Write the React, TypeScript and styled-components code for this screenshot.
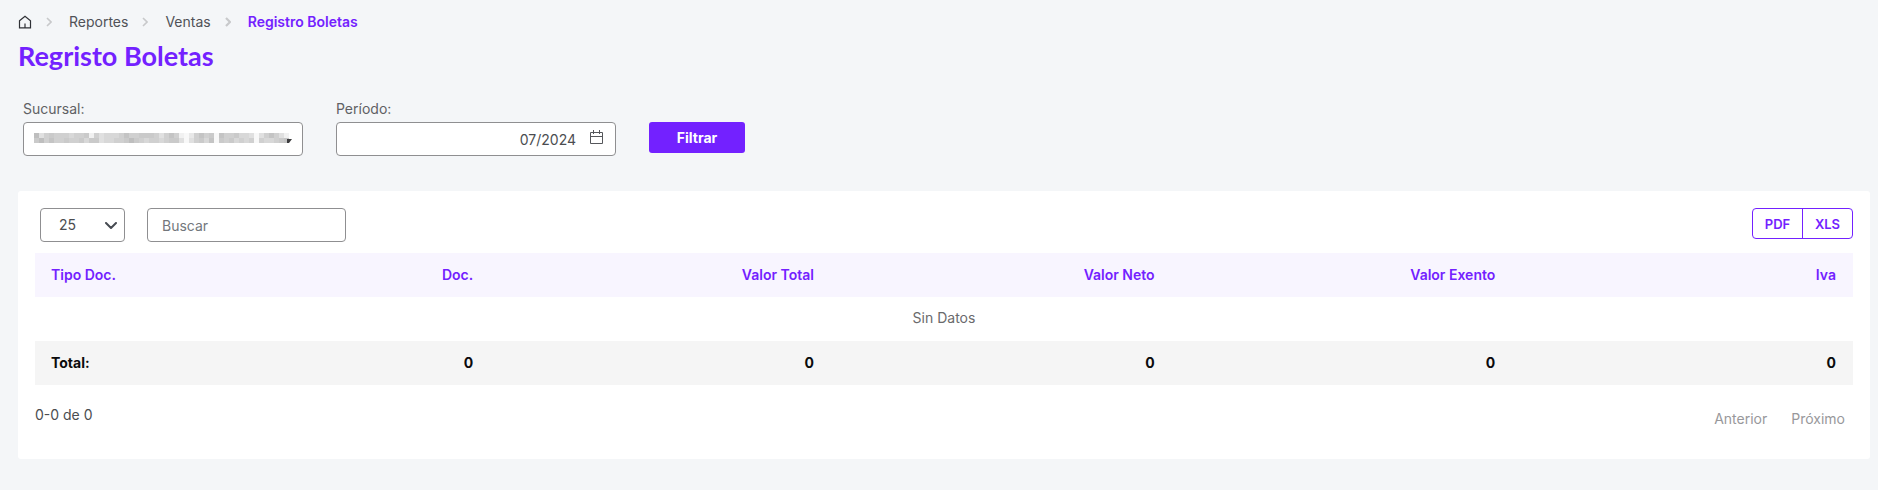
import React from 'react';
import styled, { createGlobalStyle } from 'styled-components';

const GlobalStyle = createGlobalStyle`
  * { box-sizing: border-box; }
  body {
    margin: 0;
    background: #f4f6f8;
    color: #4b4d50;
    font-family: Inter, "Liberation Sans", sans-serif;
    font-size: 14px;
    line-height: 20px;
  }
  button, input, select { font: inherit; color: inherit; margin: 0; }
`;

const Page = styled.main`
  padding: 12px 8px 32px 18px;
`;

const Breadcrumb = styled.ol`
  display: flex;
  align-items: center;
  list-style: none;
  margin: 0;
  padding: 0;
`;

const Crumb = styled.li<{ $current?: boolean }>`
  display: flex;
  align-items: center;
  color: ${p => (p.$current ? '#7321ff' : '#505257')};
  font-weight: ${p => (p.$current ? 600 : 400)};
`;

const CrumbLink = styled.a`
  display: flex;
  color: inherit;
  text-decoration: none;
`;

const Separator = styled.svg`
  margin: 0 17px 0 14px;
`;

const Title = styled.h1`
  margin: 8px 0 0;
  color: #7321ff;
  font: 700 27px/32px Lato, sans-serif;
`;

const Filters = styled.form`
  display: flex;
  align-items: flex-start;
  gap: 33px;
  margin: 27px 0 35px;
  padding-left: 5px;
`;

const Field = styled.div`
  display: flex;
  flex-direction: column;
  gap: 3px;
  width: 280px;
`;

const Label = styled.label`
  font-size: 14px;
  line-height: 20px;
  color: #5f6164;
`;

const Control = styled.div<{ $width?: string }>`
  position: relative;
  width: ${p => p.$width ?? '100%'};
`;

const controlBox = `
  display: block;
  width: 100%;
  height: 34px;
  border: 1px solid #8f8f91;
  border-radius: 4px;
  background: #fff;
  outline: none;
`;

const Select = styled.select<{ $pad: number }>`
  ${controlBox}
  appearance: none;
  padding: 0 12px 0 ${p => p.$pad}px;
`;

const TextBox = styled.input<{ $alignEnd?: boolean }>`
  ${controlBox}
  padding: 0 ${p => (p.$alignEnd ? 39 : 14)}px 0 14px;
  text-align: ${p => (p.$alignEnd ? 'right' : 'left')};
  &::placeholder { color: #73777c; opacity: 1; }
`;

const Overlay = styled.svg<{ $right: number; $top: number }>`
  position: absolute;
  right: ${p => p.$right}px;
  top: ${p => p.$top}px;
  pointer-events: none;
`;

const FilterButton = styled.button`
  width: 96px;
  height: 31px;
  margin: 23px 0 0;
  border: 0;
  border-radius: 3px;
  background: #7321ff;
  color: #fff;
  font-weight: 700;
`;

const Card = styled.section`
  background: #fff;
  border-radius: 3px;
  padding: 17px 17px 30px;
`;

const Toolbar = styled.div`
  display: flex;
  align-items: flex-start;
  gap: 22px;
  padding-left: 5px;
  margin-bottom: 11px;
`;

const ExportGroup = styled.div`
  display: flex;
  margin-left: auto;
  border: 1px solid #7321ff;
  border-radius: 4px;
`;

const ExportButton = styled.button`
  width: 49px;
  height: 29px;
  padding: 0;
  border: 0;
  background: none;
  color: #7321ff;
  font-size: 13px;
  font-weight: 600;
  & + & { width: 50px; border-left: 1px solid #7321ff; }
`;

const Table = styled.table`
  width: 100%;
  table-layout: fixed;
  border-collapse: collapse;
`;

const Row = styled.tr<{ $tone?: 'head' | 'total' }>`
  height: 44px;
  background: ${p => (p.$tone === 'head' ? '#f8f5ff' : p.$tone === 'total' ? '#f5f5f5' : '#fff')};
  color: ${p => (p.$tone === 'head' ? '#7321ff' : p.$tone === 'total' ? '#0b0b0c' : '#6a6a6c')};
  font-weight: ${p => (p.$tone === 'head' ? 600 : p.$tone === 'total' ? 700 : 400)};
`;

const cell = `
  padding: 0 17px 0 16px;
  text-align: right;
  font-weight: inherit;
  &:first-child { text-align: left; }
`;
const HeadCell = styled.th`${cell}`;
const Cell = styled.td`${cell}`;

const EmptyCell = styled.td`
  padding: 0 17px 2px;
  text-align: center;
`;

const Footer = styled.div`
  display: flex;
  justify-content: space-between;
  align-items: flex-start;
  padding-top: 20px;
`;

const Pager = styled.nav`
  display: flex;
  gap: 8px;
  padding-top: 4px;
`;

const PageButton = styled.button`
  padding: 0 8px;
  border: 0;
  background: none;
  &:disabled { color: #98989b; }
`;

const Chevron = ({ bold }: { bold?: boolean }) => (
  <Separator width="6" height="10" viewBox="0 0 6 10" fill="none" stroke="#c8c9cb" strokeWidth={bold ? 2.2 : 1.6} aria-hidden="true">
    <path d="M1 1l4 4-4 4" />
  </Separator>
);

// Grey level of each block of the masked branch name; 0 is darkest, 9 is lightest.
const maskRows = [
  '164344454438465554244333464248974243924435569642468',
  '314244344353365544313454454336964352934354549455432',
];
const levels = ['#b4b4b4', '#bebebe', '#c4c4c4', '#cacaca', '#d0d0d0', '#d8d8d8', '#e0e0e0', '#e8e8e8', '#f1f1f1', '#f8f8f8'];

const MaskedName = () => (
  <Overlay $right={14} $top={11} width="255" height="10" shapeRendering="crispEdges" aria-hidden="true">
    {maskRows.map((row, y) =>
      [...row].map((level, x) => (
        <rect key={`${x}-${y}`} x={x * 5} y={y * 5} width="5" height="5" fill={levels[Number(level)]} />
      )),
    )}
  </Overlay>
);

const columns = ['Tipo Doc.', 'Doc.', 'Valor Total', 'Valor Neto', 'Valor Exento', 'Iva'];
const totals = ['Total:', '0', '0', '0', '0', '0'];

export default function App() {
  return (
    <Page>
      <GlobalStyle />
      <Breadcrumb>
        <Crumb>
          <CrumbLink href="#" aria-label="Inicio">
            <svg width="14" height="14" viewBox="0 0 14 14" fill="none" stroke="#2f3136" strokeWidth="1.2">
              <path d="M1.5 5.800L7 1.300l5.500 4.500v7h-11zM7 8.500v4" />
            </svg>
          </CrumbLink>
        </Crumb>
        <Crumb><Chevron /><CrumbLink href="#">Reportes</CrumbLink></Crumb>
        <Crumb><Chevron /><CrumbLink href="#">Ventas</CrumbLink></Crumb>
        <Crumb $current aria-current="page"><Chevron bold />Registro Boletas</Crumb>
      </Breadcrumb>
      <Title>Regristo Boletas</Title>

      <Filters onSubmit={e => e.preventDefault()}>
        <Field>
          <Label htmlFor="sucursal">Sucursal:</Label>
          <Control>
            <Select id="sucursal" $pad={10}><option value="" /></Select>
            <MaskedName />
            <Overlay $right={11} $top={17} width="5" height="4" viewBox="0 0 5 4" fill="#3c3c3e" aria-hidden="true">
              <path d="M0 0h5L2 4H0z" />
            </Overlay>
          </Control>
        </Field>
        <Field>
          <Label htmlFor="periodo">Período:</Label>
          <Control>
            <TextBox id="periodo" $alignEnd defaultValue="07/2024" />
            <Overlay $right={12} $top={8} width="15" height="15" viewBox="0 0 15 15" fill="none" stroke="#55575b" aria-hidden="true">
              <path d="M1.500 2.500h12v11h-12zM1.500 6.500h12M4.500 0v4M10.500 0v4" />
            </Overlay>
          </Control>
        </Field>
        <FilterButton type="submit">Filtrar</FilterButton>
      </Filters>

      <Card>
        <Toolbar>
          <Control $width="85px">
            <Select $pad={18} aria-label="Filas por página"><option>25</option></Select>
            <Overlay $right={8} $top={14} width="12" height="8" viewBox="0 0 12 8" fill="none" stroke="#474b52" strokeWidth="2" strokeLinecap="round" strokeLinejoin="round" aria-hidden="true">
              <path d="M1 1l5 5 5-5" />
            </Overlay>
          </Control>
          <Control $width="199px">
            <TextBox type="search" placeholder="Buscar" aria-label="Buscar" />
          </Control>
          <ExportGroup>
            <ExportButton type="button">PDF</ExportButton>
            <ExportButton type="button">XLS</ExportButton>
          </ExportGroup>
        </Toolbar>
        <Table>
          <colgroup><col width="6.3%" /></colgroup>
          <thead>
            <Row $tone="head">{columns.map(c => <HeadCell key={c} scope="col">{c}</HeadCell>)}</Row>
          </thead>
          <tbody>
            <Row><EmptyCell colSpan={6}>Sin Datos</EmptyCell></Row>
          </tbody>
          <tfoot>
            <Row $tone="total">{totals.map((t, i) => <Cell key={columns[i]}>{t}</Cell>)}</Row>
          </tfoot>
        </Table>
        <Footer>
          <span>0-0 de 0</span>
          <Pager aria-label="Paginación">
            <PageButton disabled>Anterior</PageButton>
            <PageButton disabled>Próximo</PageButton>
          </Pager>
        </Footer>
      </Card>
    </Page>
  );
}
